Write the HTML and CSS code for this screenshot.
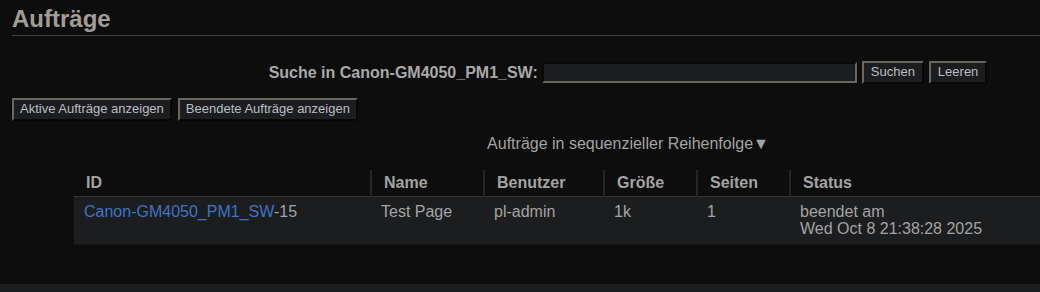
FILE: index.html
```html
<!DOCTYPE html>
<html lang="de">
<head>
    <meta charset="UTF-8">
    <title>Aufträge - CUPS</title>
    <link rel="stylesheet" href="styles.css">
</head>
<body>
    <div class="page">
        <h2 class="title">Aufträge</h2>

        <form class="search" action="/jobs/" method="get">
            <label class="search-label" for="query">Suche in Canon-GM4050_PM1_SW:</label>
            <input type="text" id="query" name="QUERY" class="search-input">
            <input type="submit" class="btn" value="Suchen">
            <input type="submit" class="btn" value="Leeren">
        </form>

        <div class="filters">
            <button class="btn">Aktive Aufträge anzeigen</button>
            <button class="btn">Beendete Aufträge anzeigen</button>
        </div>

        <p class="order">Aufträge in sequenzieller Reihenfolge<span class="arrow">▼</span></p>

        <table class="list">
            <colgroup>
                <col class="c-id">
                <col class="c-name">
                <col class="c-user">
                <col class="c-size">
                <col class="c-pages">
                <col>
            </colgroup>
            <thead>
                <tr>
                    <th>ID</th>
                    <th>Name</th>
                    <th>Benutzer</th>
                    <th>Größe</th>
                    <th>Seiten</th>
                    <th>Status</th>
                </tr>
            </thead>
            <tbody>
                <tr>
                    <td><a href="#">Canon-GM4050_PM1_SW</a>-15</td>
                    <td>Test Page</td>
                    <td>pl-admin</td>
                    <td>1k</td>
                    <td>1</td>
                    <td>beendet am<br>Wed Oct 8 21:38:28 2025</td>
                </tr>
            </tbody>
        </table>
    </div>
    <div class="footer"></div>
</body>
</html>
```

FILE: styles.css
```css
html, body {
    margin: 0;
    padding: 0;
    background-color: #0d0d0d;
    color: #a3a3a3;
    font-family: "Liberation Sans", Arial, sans-serif;
    font-size: 16px;
}

.page {
    padding: 0 0 0 12px;
    height: 284px;
    overflow: hidden;
}

.title {
    margin: 0;
    padding: 6px 0 3px;
    font-size: 24px;
    line-height: 26px;
    font-weight: bold;
    color: #a29d97;
    border-bottom: 1px solid #3f4140;
}

.search {
    display: flex;
    justify-content: center;
    align-items: center;
    gap: 5px;
    margin-top: 25px;
    padding-left: 204px;
}

.search-label {
    font-weight: bold;
    font-size: 16px;
    color: #a8a8a8;
    margin-right: -1px;
}

.search-input {
    appearance: none;
    box-sizing: border-box;
    width: 315px;
    height: 21px;
    margin: 0;
    padding: 0 2px;
    background-color: #1c1d1f;
    color: #c0c0c0;
    border: 2px solid #6a655e;
    border-top-color: #0a0a0a;
    border-left-color: #0a0a0a;
    outline: none;
}

.btn {
    margin: 0;
    padding: 1px 6px 2px;
    font-family: "Liberation Sans", Arial, sans-serif;
    font-size: 13px;
    line-height: 16px;
    background-color: #1c1d1f;
    color: #b9bec4;
    border: 2px solid #6a665f;
    border-right-color: #080808;
    border-bottom-color: #080808;
    cursor: pointer;
}

.search .btn {
    padding: 1px 7px 2px;
}

.filters {
    display: flex;
    gap: 6px;
    margin-top: 14px;
}

.order {
    margin: 14px 0 0;
    text-align: center;
    padding-left: 204px;
    font-size: 16px;
    line-height: 18px;
    color: #a3a3a3;
}

.arrow {
    font-size: 16px;
}

.list {
    margin: 17px 0 0 62px;
    width: 966px;
    border-collapse: collapse;
    table-layout: fixed;
}

.c-id { width: 297px; }
.c-name { width: 113px; }
.c-user { width: 120px; }
.c-size { width: 93px; }
.c-pages { width: 93px; }

.list th {
    text-align: left;
    font-weight: bold;
    font-size: 16px;
    color: #a3a3a3;
    padding: 4px 12px 4px;
    line-height: 18px;
    border-left: 2px solid #262626;
    border-bottom: 1px solid #353535;
}

.list th:first-child {
    border-left: none;
}

.list td {
    vertical-align: top;
    background-color: #1c1d1f;
    padding: 6px 10px 7px;
    line-height: 17px;
    border-bottom: 1px solid #141414;
}

.list a {
    color: #3c74c7;
    text-decoration: none;
}

.footer {
    height: 8px;
    background-color: #1c1d1f;
}
```
